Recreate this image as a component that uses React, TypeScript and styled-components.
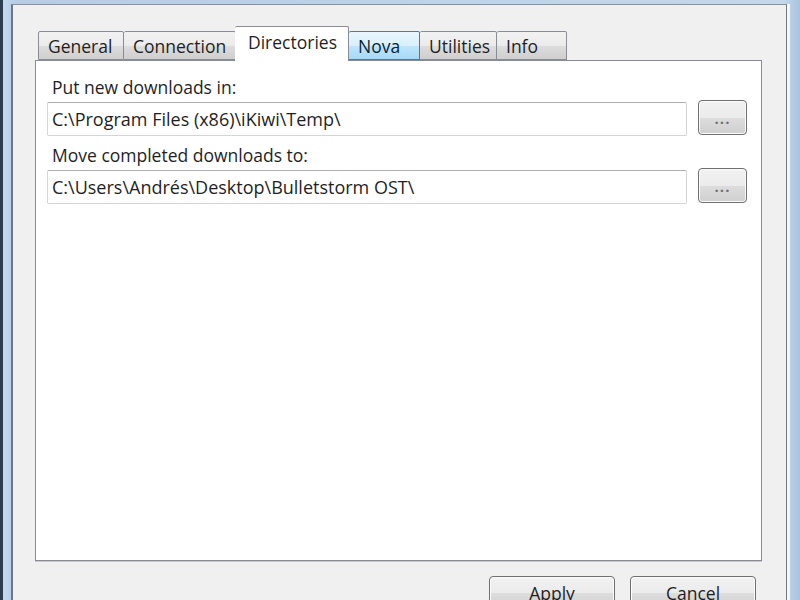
import React from 'react';
import styled, { createGlobalStyle } from 'styled-components';

const GlobalStyle = createGlobalStyle`
  html, body {
    margin: 0;
    padding: 0;
    overflow: hidden;
  }
  body {
    font-family: "Open Sans", "Noto Sans", sans-serif;
    color: #1f1f1f;
  }
`;

type TabItem = {
    label: string
    width: number
    active?: boolean
    hot?: boolean
}

const tabs: TabItem[] = [
    {label: 'General', width: 86},
    {label: 'Connection', width: 112},
    {label: 'Directories', width: 114, active: true},
    {label: 'Nova', width: 71, hot: true},
    {label: 'Utilities', width: 77},
    {label: 'Info', width: 70},
];

type PathFieldProps = {
    label: string
    value: string
}

const PathField = (props: PathFieldProps) => {
    return (
        <FieldGroup>
            <Label>{props.label}</Label>
            <PathRow>
                <PathBox>{props.value}</PathBox>
                <BrowseButton>
                    <Dots>...</Dots>
                </BrowseButton>
            </PathRow>
        </FieldGroup>
    );
};

export default function App() {
    return (
        <Frame>
            <GlobalStyle/>
            <Dialog>
                <TabStrip>
                    {tabs.map(t => (
                        <Tab key={t.label} $w={t.width} $active={t.active} $hot={t.hot}>
                            {t.label}
                        </Tab>
                    ))}
                </TabStrip>
                <TabPanel>
                    <PathField label="Put new downloads in:" value="C:\Program Files (x86)\iKiwi\Temp\"/>
                    <PathField label="Move completed downloads to:" value="C:\Users\Andrés\Desktop\Bulletstorm OST\"/>
                </TabPanel>
                <Footer>
                    <DialogButton>Apply</DialogButton>
                    <DialogButton>Cancel</DialogButton>
                </Footer>
            </Dialog>
        </Frame>
    );
}

const Frame = styled.div`
  box-sizing: border-box;
  width: 800px;
  height: 600px;
  overflow: hidden;
  display: flex;
  align-items: flex-start;
  padding: 4px 13px 0 8px;
  border-left: 3px solid #2e3e50;
  background: linear-gradient(to right, #c6d9ee, #b7cde6 1.5%, #c4d7ec 98%, #a9c2de);
`

const Dialog = styled.div`
  box-sizing: border-box;
  width: 776px;
  height: 640px;
  flex-shrink: 0;
  display: flex;
  flex-direction: column;
  padding: 21px 24px 0 22px;
  background: #f0f0f0;
  border-top: 1px solid #8a939c;
  border-left: 2px solid #6f7882;
  border-right: 1px solid #6f7780;
  box-shadow: 3px 0 0 #f5f8fb;
`

const TabStrip = styled.div`
  display: flex;
  align-items: flex-end;
  height: 34px;
  padding-left: 3px;
`

const Tab = styled.div<{ $w: number, $active?: boolean, $hot?: boolean }>`
  box-sizing: border-box;
  width: ${p => p.$w}px;
  height: ${p => p.$active ? 35 : 29}px;
  margin: ${p => p.$active ? '0 0 -1px -1px' : '0'};
  padding: ${p => p.$active ? '0 0 2px 13px' : '2px 0 0 9px'};
  position: relative;
  z-index: ${p => p.$active ? 2 : 0};
  display: flex;
  align-items: center;
  justify-content: flex-start;
  font-size: 17.5px;
  line-height: 1;
  color: ${p => p.$hot ? '#0b1f33' : '#1f1f1f'};
  border: 1px solid ${p => p.$hot ? '#3c7fb1' : '#898c95'};
  border-bottom: ${p => p.$active ? 'none' : `1px solid ${p.$hot ? '#3c7fb1' : '#898c95'}`};
  border-radius: 2px 2px 0 0;
  background: ${p => p.$active
    ? '#ffffff'
    : p.$hot
        ? 'linear-gradient(#eaf6fd, #d9f0fc 50%, #bee6fd 51%, #a7d9f5)'
        : 'linear-gradient(#f2f2f2, #ebebeb 50%, #dddddd 51%, #cfcfcf)'};
  & + & {
    border-left: ${p => p.$active ? '1px solid #898c95' : 'none'};
  }
`

const TabPanel = styled.div`
  box-sizing: border-box;
  height: 501px;
  display: flex;
  flex-direction: column;
  gap: 9px;
  padding: 16px 14px 0 11px;
  background: #ffffff;
  border: 1px solid #898c95;
  box-shadow: 0 1px 0 #c8c8c8;
`

const FieldGroup = styled.div`
  display: flex;
  flex-direction: column;
  gap: 5px;
`

const Label = styled.div`
  padding-left: 5px;
  font-size: 17.5px;
  line-height: 20px;
  height: 20px;
`

const PathRow = styled.div`
  display: flex;
  align-items: flex-start;
  gap: 11px;
`

const PathBox = styled.div`
  box-sizing: border-box;
  flex: 1;
  height: 34px;
  display: flex;
  align-items: center;
  padding: 0 4px 1px;
  font-size: 18px;
  background: #ffffff;
  border: 1px solid #d5d5d5;
  border-top-color: #abadb3;
  border-radius: 2px;
  white-space: nowrap;
`

const BrowseButton = styled.div`
  box-sizing: border-box;
  width: 49px;
  height: 35px;
  margin-top: -2px;
  display: flex;
  align-items: flex-end;
  justify-content: center;
  border: 1px solid #707070;
  border-radius: 4px;
  box-shadow: inset 0 0 0 1px #fbfbfb;
  background: linear-gradient(#f2f2f2, #ebebeb 50%, #dddddd 51%, #cfcfcf);
`

const Dots = styled.span`
  font-size: 15px;
  font-weight: 700;
  line-height: 1;
  letter-spacing: 1px;
  color: #707070;
  padding-bottom: 8px;
`

const Footer = styled.div`
  display: flex;
  justify-content: flex-end;
  gap: 15px;
  margin-top: 15px;
  padding-right: 6px;
`

const DialogButton = styled.div`
  box-sizing: border-box;
  width: 126px;
  height: 34px;
  display: flex;
  align-items: flex-start;
  justify-content: center;
  padding-top: 4px;
  font-size: 17.5px;
  border: 1px solid #707070;
  border-radius: 4px;
  box-shadow: inset 0 0 0 1px #fbfbfb;
  background: linear-gradient(#f2f2f2, #ebebeb 50%, #dddddd 51%, #cfcfcf);
`
